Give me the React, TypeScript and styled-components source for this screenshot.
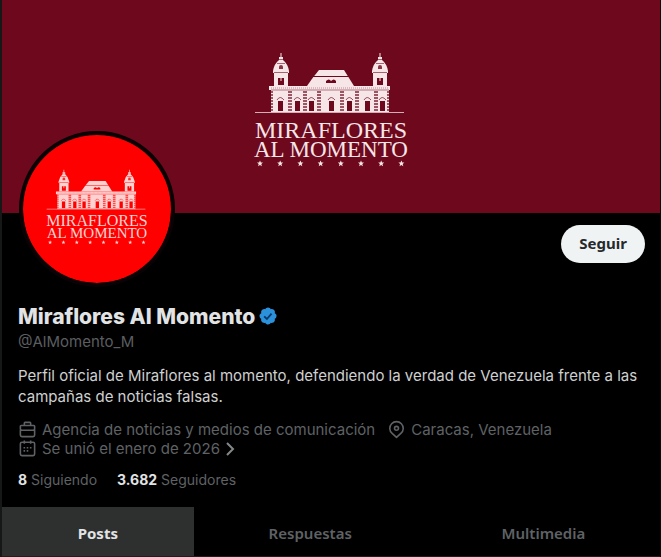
import React from "react";
import styled, { createGlobalStyle } from "styled-components";

const GlobalStyle = createGlobalStyle`
  *, *::before, *::after { box-sizing: border-box; }
  body { margin: 0; background: #000; font-family: Inter, "Liberation Sans", sans-serif; }
  button { font: inherit; border: 0; cursor: pointer; }
  a { color: inherit; text-decoration: none; }
`;

const Page = styled.main`
  min-height: 557px;
  background: #000;
  color: #e2e3e4;
  border-left: 2px solid #161717;
  border-right: 1px solid #0b0b0b;
`;

const Banner = styled.header`
  display: flex;
  justify-content: center;
  align-items: flex-start;
  height: 213px;
  padding-top: 52px;
  background: #6e081c;
`;

const EmblemBox = styled.div<{ $small?: boolean; $tint: string; $ground: string }>`
  --ground: ${(p) => p.$ground};
  display: flex;
  flex-direction: column;
  align-items: center;
  width: ${(p) => (p.$small ? 106 : 160)}px;
  color: ${(p) => p.$tint};
  font-family: "Liberation Serif", serif;
  white-space: nowrap;
`;

const Building = styled.svg<{ $small?: boolean }>`
  display: block;
  width: 100%;
  margin-bottom: ${(p) => (p.$small ? 5 : 7)}px;
  fill: currentColor;
`;

const TitleLine = styled.div<{ $small?: boolean }>`
  font-size: ${(p) => (p.$small ? 16 : 24)}px;
  line-height: ${(p) => (p.$small ? 12 : 19)}px;
`;

const SubtitleLine = styled.div<{ $small?: boolean }>`
  font-size: ${(p) => (p.$small ? 15 : 23)}px;
  line-height: ${(p) => (p.$small ? 12 : 19)}px;
`;

const Stars = styled.svg`
  display: block;
  width: 100%;
  margin-top: 1px;
  fill: currentColor;
`;

const ProfileTop = styled.div`
  display: flex;
  justify-content: space-between;
  align-items: flex-start;
  padding: 0 15px 0 17px;
`;

const Avatar = styled.div`
  display: flex;
  justify-content: center;
  align-items: flex-start;
  width: 156px;
  height: 156px;
  margin-top: -82px;
  padding-top: 34px;
  border: 4px solid #0a0204;
  border-radius: 50%;
  background: #fe0000;
  background-clip: padding-box;
`;

const FollowButton = styled.button`
  height: 38px;
  margin-top: 12px;
  padding: 0 18px 2px;
  border-radius: 19px;
  background: #eff3f4;
  color: #26292b;
  font-family: "Noto Sans", sans-serif;
  font-size: 15px;
  font-weight: 700;
`;

const Details = styled.section`
  padding: 18px 17px 0 16px;
`;

const Name = styled.h1`
  display: flex;
  align-items: center;
  gap: 3px;
  margin: 0;
  font-size: 21px;
  line-height: 24px;
  font-weight: 800;
`;

const Handle = styled.div`
  margin-top: 3px;
  color: #5b5e61;
  font-size: 15px;
  line-height: 20px;
`;

const Bio = styled.p`
  margin: 13px 0 0;
  color: #cfd0d1;
  font-size: 15px;
  line-height: 21px;
`;

const MetaList = styled.div`
  display: flex;
  flex-wrap: wrap;
  gap: 0 12px;
  margin-top: 13px;
  color: #5f6265;
  font-size: 15px;
  line-height: 19px;
`;

const MetaItem = styled.span`
  display: inline-flex;
  align-items: center;
  gap: 5px;
`;

const MetaLink = styled.a`
  display: inline-flex;
  align-items: center;
  gap: 5px;
`;

const Icon = styled.svg`
  display: block;
  width: 19px;
  height: 19px;
  flex: none;
  fill: none;
  stroke: currentColor;
  stroke-width: 2;
  stroke-linejoin: round;
`;

const Arrow = styled.svg`
  width: 10px;
  height: 16px;
  fill: none;
  stroke: #85888a;
  stroke-width: 2;
`;

const Counts = styled.div`
  display: flex;
  gap: 20px;
  margin-top: 12px;
  color: #5f6265;
  font-size: 14px;
  line-height: 20px;
`;

const Count = styled.strong`
  color: #e2e3e4;
  font-weight: 700;
`;

const Tabs = styled.nav`
  display: grid;
  grid-template-columns: 83fr 101fr 101fr;
  margin-top: 17px;
  border-bottom: 1px solid #1c1e1f;
`;

const Tab = styled.button<{ $active?: boolean }>`
  height: 49px;
  padding: 3px 0 0;
  background: ${(p) => (p.$active ? "#2e302f" : "transparent")};
  color: ${(p) => (p.$active ? "#e2e3e4" : "#5f6265")};
  font-family: "Noto Sans", sans-serif;
  font-size: 15px;
  font-weight: ${(p) => (p.$active ? 700 : 600)};
`;

const columns = [39, 54, 68, 91, 106, 125];
const windows = [27, 44, 58, 78, 96, 114, 129];
const stars = [0, 1, 2, 3, 4, 5, 6, 7];

function Tower({ x }: { x: number }) {
  return (
    <g transform={`translate(${x} 0)`}>
      <path d="M-.5 1h1v4H2v3q5 4 6 11v2H7v13H-7V21h-1v-2q1-7 6-11V5h1.500z" />
      <g fill="var(--ground)">
        <path d="M-2 17v-2a2 2 0 0 1 4 0v2z" opacity=".8" />
        <path d="M-3 33v-7h2.500v3h1v-3H3v7z" />
        <path d="M-7 20H7v1H-7zM-4 11h8v1h-8zM-2 7h4v1h-4z" opacity=".6" />
      </g>
    </g>
  );
}

interface EmblemProps {
  small?: boolean;
  ground: string;
  tint: string;
}

function Emblem({ small, ground, tint }: EmblemProps) {
  return (
    <EmblemBox $small={small} $tint={tint} $ground={ground}>
      <Building $small={small} viewBox="0 0 160 62" aria-hidden="true">
        <Tower x={30} />
        <Tower x={129} />
        <path d="M68 18h25q5 8 10 16H56q6-9 12-16z" />
        <path d="M18 34h121v4H18zM20 38h118v22H20z" />
        <path d="M4 60h149v1H4z" opacity=".75" />
        <path d="M61 24h37v1H61zM75 31v-2q3-3 5 0 3-3 5 0v2z" fill="var(--ground)" />
        <g fill="none" stroke="var(--ground)">
          <path d="M20 36h118" strokeDasharray="1 1" opacity=".4" />
          <path d="M20 38h118" opacity=".5" />
          {columns.map((x) => (
            <path key={x} d={`M${x} 39v21`} strokeWidth="4" strokeDasharray="2 1" opacity=".65" />
          ))}
          <path d="M21 39v21M137 39v21" strokeWidth="2" strokeDasharray="2 1" opacity=".65" />
        </g>
        {windows.map((x) => (
          <g key={x} fill="var(--ground)">
            <path d={`M${x} 59V49h5v10z`} />
            <path d={`M${x - 1} 48q3-5 7 0`} fill="none" stroke="var(--ground)" opacity=".7" />
          </g>
        ))}
      </Building>
      <TitleLine $small={small}>MIRAFLORES</TitleLine>
      <SubtitleLine $small={small}>AL MOMENTO</SubtitleLine>
      <Stars viewBox="0 0 160 7" aria-hidden="true">
        {stars.map((i) => (
          <path
            key={i}
            transform={`translate(${9 + i * 20.2} 3.5)`}
            d="M0-3 .9-1 3-.9 1.3.6 1.9 2.8 0 1.5-1.9 2.8-1.3.6-3-.9-.9-1z"
          />
        ))}
      </Stars>
    </EmblemBox>
  );
}

const Badge = styled.svg`
  display: block;
  width: 20px;
  height: 20px;
  margin-top: -2px;
  flex: none;
`;

function VerifiedBadge() {
  return (
    <Badge viewBox="0 0 22 22" role="img" aria-label="Cuenta verificada">
      <path
        fill="#2b91db"
        d="M20.4 11c0-.65-.2-1.27-.55-1.81-.35-.54-.84-.97-1.43-1.24.22-.61.27-1.26.14-1.9-.13-.63-.43-1.22-.88-1.69-.47-.45-1.05-.75-1.69-.88-.63-.13-1.29-.08-1.89.14-.27-.59-.7-1.08-1.24-1.44S11.65 1.64 11 1.62c-.65.02-1.27.21-1.81.56s-.97.85-1.24 1.44c-.61-.22-1.26-.27-1.9-.14-.64.13-1.22.43-1.69.88-.45.47-.75 1.06-.88 1.69-.13.64-.08 1.29.15 1.9-.59.27-1.09.7-1.44 1.24-.36.54-.55 1.16-.57 1.81.02.65.21 1.27.57 1.81.35.54.85.97 1.44 1.24-.23.61-.28 1.26-.15 1.9.13.63.43 1.22.88 1.69.47.44 1.05.75 1.69.88.64.13 1.29.08 1.9-.14.27.58.7 1.08 1.24 1.43.54.36 1.16.55 1.81.57.65-.02 1.27-.2 1.82-.55.54-.36.97-.85 1.24-1.44.6.24 1.26.29 1.89.15.64-.13 1.22-.44 1.69-.9.45-.47.76-1.05.88-1.69.13-.63.08-1.29-.14-1.9.58-.27 1.08-.7 1.43-1.24.36-.54.55-1.16.57-1.81z"
      />
      <path d="m6.8 11.3 3 3 5.1-6" fill="none" stroke="#0b3766" strokeWidth="2" />
    </Badge>
  );
}

export default function App() {
  return (
    <>
      <GlobalStyle />
      <Page>
        <Banner>
          <Emblem ground="#6e081c" tint="#f7e6e8" />
        </Banner>
        <ProfileTop>
          <Avatar>
            <Emblem small ground="#fe0000" tint="#ffd2d2" />
          </Avatar>
          <FollowButton type="button">Seguir</FollowButton>
        </ProfileTop>
        <Details>
          <Name>
            Miraflores Al Momento
            <VerifiedBadge />
          </Name>
          <Handle>@AlMomento_M</Handle>
          <Bio>
            Perfil oficial de Miraflores al momento, defendiendo la verdad de Venezuela frente a las
            campañas de noticias falsas.
          </Bio>
          <MetaList>
            <MetaItem>
              <Icon viewBox="0 0 24 24" aria-hidden="true">
                <path d="M8 7V4q0-1 1-1h6q1 0 1 1v3M4 7h16q1 0 1 1v3q0 2-2 2H5q-2 0-2-2V8q0-1 1-1zM3 12v7q0 2 2 2h14q2 0 2-2v-7M9 13h6" />
              </Icon>
              Agencia de noticias y medios de comunicación
            </MetaItem>
            <MetaItem>
              <Icon viewBox="0 0 24 24" aria-hidden="true">
                <path d="M12 22 6.500 17a8.500 8.500 0 1 1 11 0z" />
                <circle cx="12" cy="10.5" r="2.500" />
              </Icon>
              Caracas, Venezuela
            </MetaItem>
            <MetaLink href="#about">
              <Icon viewBox="0 0 24 24" aria-hidden="true">
                <path d="M5 4h14q2 0 2 2v13q0 2-2 2H5q-2 0-2-2V6q0-2 2-2zM8 2v4M16 2v4" />
                <path d="M7 15h2M11 15h2M7 11h2M11 11h2M15 11h2" />
              </Icon>
              Se unió el enero de 2026
              <Arrow viewBox="0 0 10 16" aria-hidden="true">
                <path d="m2 2 6 6-6 6" />
              </Arrow>
            </MetaLink>
          </MetaList>
          <Counts>
            <a href="#following"><Count>8</Count> Siguiendo</a>
            <a href="#followers"><Count>3.682</Count> Seguidores</a>
          </Counts>
        </Details>
        <Tabs>
          <Tab type="button" $active>Posts</Tab>
          <Tab type="button">Respuestas</Tab>
          <Tab type="button">Multimedia</Tab>
        </Tabs>
      </Page>
    </>
  );
}
